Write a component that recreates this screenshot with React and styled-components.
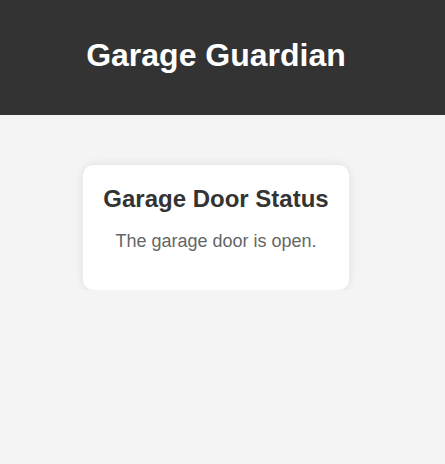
import React from 'react';
import styled, { createGlobalStyle } from 'styled-components';

const GlobalStyle = createGlobalStyle`
  html, body {
    margin: 0;
    padding: 0;
    background: #f4f4f4;
    font-family: "Liberation Sans", Arial, sans-serif;
  }
`;

const Header = styled.header`
  background: #333;
  color: #fff;
  padding: 37px 13px 41px 0;
  text-align: center;

  h1 {
    margin: 0;
    font-size: 32px;
    line-height: 37px;
    font-weight: bold;
  }
`;

const Main = styled.main`
  display: flex;
  justify-content: center;
  padding: 50px 13px 0 0;
`;

const Card = styled.div`
  background: #fff;
  border-radius: 10px;
  box-shadow: 0 0 10px rgba(0, 0, 0, 0.1);
  padding: 20px;
  text-align: center;

  h2 {
    margin: 0 0 18px;
    font-size: 24px;
    line-height: 28px;
    color: #333;
  }

  p {
    margin: 0 0 18px;
    font-size: 18px;
    line-height: 21px;
    color: #666;
  }
`;

const App = () => {
  return (
    <>
      <GlobalStyle />
      <Header>
        <h1>Garage Guardian</h1>
      </Header>
      <Main>
        <Card>
          <h2>Garage Door Status</h2>
          <p>The garage door is open.</p>
        </Card>
      </Main>
    </>
  );
};

export default App;
